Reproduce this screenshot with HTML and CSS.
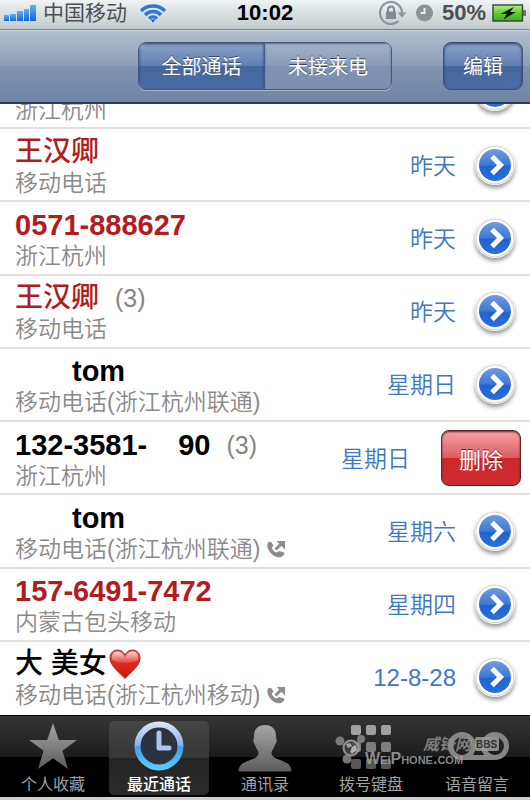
FILE: index.html
```html
<!DOCTYPE html>
<html lang="zh-CN">
  <head>
    <meta charset="UTF-8">
    <meta name="viewport" content="width=device-width, initial-scale=1">
    <title>最近通话</title>
    <link rel="stylesheet" href="styles.css">
  </head>
  <body>
    <!-- Shared icons and gradients -->
    <svg class="defs" width="0" height="0" aria-hidden="true">
      <defs>
        <linearGradient id="blueTop" x1="0" y1="0" x2="0" y2="1">
          <stop offset="0" stop-color="#6f9ce2"/>
          <stop offset="0.5" stop-color="#3f78d4"/>
          <stop offset="0.55" stop-color="#1f63cf"/>
          <stop offset="1" stop-color="#2a6fdc"/>
        </linearGradient>
        <linearGradient id="signal" x1="0" y1="0" x2="0" y2="1">
          <stop offset="0" stop-color="#5fb2f5"/>
          <stop offset="1" stop-color="#1465cf"/>
        </linearGradient>
        <linearGradient id="grey" x1="0" y1="0" x2="0" y2="1">
          <stop offset="0" stop-color="#a6a6a6"/>
          <stop offset="1" stop-color="#5c5c5c"/>
        </linearGradient>
        <linearGradient id="clockBlue" gradientUnits="userSpaceOnUse" x1="0" y1="0" x2="0" y2="50">
          <stop offset="0" stop-color="#dfe9fa"/>
          <stop offset="0.48" stop-color="#88b4ee"/>
          <stop offset="0.52" stop-color="#4a9bea"/>
          <stop offset="1" stop-color="#55d3ff"/>
        </linearGradient>
        <linearGradient id="heartRed" x1="0" y1="0" x2="0" y2="1">
          <stop offset="0" stop-color="#e8524a"/>
          <stop offset="0.5" stop-color="#e0261b"/>
          <stop offset="1" stop-color="#c01a10"/>
        </linearGradient>
        <linearGradient id="heartShine" x1="0" y1="0" x2="0" y2="1">
          <stop offset="0" stop-color="#fff" stop-opacity="0.75"/>
          <stop offset="1" stop-color="#fff" stop-opacity="0.1"/>
        </linearGradient>
        <linearGradient id="charge" x1="0" y1="0" x2="0" y2="1">
          <stop offset="0" stop-color="#b5ee8c"/>
          <stop offset="0.5" stop-color="#5fcf2c"/>
          <stop offset="1" stop-color="#3fae18"/>
        </linearGradient>
      </defs>
      <symbol id="more" viewBox="0 0 40 40">
        <circle cx="20" cy="20" r="19.5" fill="#d2d2d2"/>
        <circle cx="20" cy="20" r="18.5" fill="#fff"/>
        <circle cx="20" cy="20" r="16" fill="url(#blueTop)"/>
        <path d="M17 11.500l8.500 8.500-8.500 8.500" fill="none" stroke="#fff" stroke-width="5"/>
      </symbol>
      <symbol id="outgoing" viewBox="0 0 18 18">
        <path d="M.500 4C1 2 3 1 4.500 2.500l2 3-1.800 2.200c.8 2.300 2.600 4 4.800 4.800l2.500-1.500 5 1.500c1 1-.500 3.500-3 4.500C7 19-1 10 .500 4z" fill="#8c8c8c"/>
        <path d="M8.500 9.500l6-6" stroke="#8c8c8c" stroke-width="3"/>
        <path d="M9.500 1H18v8.500z" fill="#8c8c8c"/>
      </symbol>
    </svg>

    <div class="phone">
      <header class="status">
        <div class="carrier">
          <svg width="32" height="17" viewBox="0 0 32 17" fill="url(#signal)">
            <rect x="0" y="10" width="5" height="6"/>
            <rect x="6" y="9" width="6" height="7"/>
            <rect x="13" y="6" width="6" height="10"/>
            <rect x="20" y="4" width="5" height="12"/>
            <rect x="26" y="0" width="6" height="16"/>
          </svg>
          <span>中国移动</span>
          <svg class="wifi" width="28" height="20" viewBox="0 0 28 20" fill="none" stroke="#2f78d8" stroke-width="3.400">
            <path d="M2 8a17 17 0 0 1 24 0"/>
            <path d="M6 12a11 11 0 0 1 16 0"/>
            <path d="M10 15.500a6 6 0 0 1 8 0"/>
            <path d="M11.500 16.500h5L14 19.500z" fill="#1d53b5" stroke="none"/>
          </svg>
        </div>
        <time class="time">10:02</time>
        <div class="power">
          <svg class="lock" width="29" height="26" viewBox="0 0 29 26">
            <path d="M20.500 21A11 11 0 1 1 24 13" fill="none" stroke="#8f9496" stroke-width="2.200"/>
            <path d="M19.500 12.500h9L24 17.500z" fill="#8f9496"/>
            <rect x="8" y="11.500" width="10" height="7.500" fill="#83898c"/>
            <path d="M10 12V9.500a3 3 0 0 1 6 0V12" fill="none" stroke="#83898c" stroke-width="2"/>
          </svg>
          <svg class="alarm" width="17" height="18" viewBox="0 0 17 18">
            <circle cx="8.500" cy="9" r="8.500" fill="#8d9395"/>
            <path d="M8.500 4v5H4.500" fill="none" stroke="#e8edef" stroke-width="2"/>
          </svg>
          <span>50%</span>
          <svg width="34" height="18" viewBox="0 0 34 18">
            <rect x="31" y="6" width="3" height="6" rx="1" fill="#6b7178"/>
            <rect x="1" y="1" width="29.500" height="16" fill="url(#charge)" stroke="#3f4a3d" stroke-width="1.500"/>
            <path d="M22 3L8.500 10h6l-3 5.500L24 8h-6z" fill="#0b1a05"/>
          </svg>
        </div>
      </header>

      <nav class="navbar">
        <div class="segmented">
          <button class="seg on" type="button">全部通话</button>
          <button class="seg" type="button">未接来电</button>
        </div>
        <button class="edit" type="button">编辑</button>
      </nav>

      <main class="calls">
        <!-- Scrolled half way under the navigation bar -->
        <div class="call scrolled">
          <div class="who">
            <div class="place">浙江杭州</div>
          </div>
          <button class="more" type="button" aria-label="详情"><svg><use href="#more"/></svg></button>
        </div>

        <div class="call missed">
          <div class="who">
            <div class="name han">王汉卿</div>
            <div class="place">移动电话</div>
          </div>
          <div class="date">昨天</div>
          <button class="more" type="button" aria-label="详情"><svg><use href="#more"/></svg></button>
        </div>

        <div class="call missed">
          <div class="who">
            <div class="name">0571-888627</div>
            <div class="place">浙江杭州</div>
          </div>
          <div class="date">昨天</div>
          <button class="more" type="button" aria-label="详情"><svg><use href="#more"/></svg></button>
        </div>

        <div class="call missed">
          <div class="who">
            <div class="name han">王汉卿<span class="count">(3)</span></div>
            <div class="place">移动电话</div>
          </div>
          <div class="date">昨天</div>
          <button class="more" type="button" aria-label="详情"><svg><use href="#more"/></svg></button>
        </div>

        <div class="call">
          <div class="who">
            <div class="name indent">tom</div>
            <div class="place">移动电话(浙江杭州联通)</div>
          </div>
          <div class="date">星期日</div>
          <button class="more" type="button" aria-label="详情"><svg><use href="#more"/></svg></button>
        </div>

        <div class="call deleting">
          <div class="who">
            <div class="name">132-3581-<span class="tail">90</span><span class="count">(3)</span></div>
            <div class="place">浙江杭州</div>
          </div>
          <div class="date">星期日</div>
          <button class="delete" type="button">删除</button>
        </div>

        <div class="call">
          <div class="who">
            <div class="name indent">tom</div>
            <div class="place">移动电话(浙江杭州联通)<svg class="outgoing"><use href="#outgoing"/></svg></div>
          </div>
          <div class="date">星期六</div>
          <button class="more" type="button" aria-label="详情"><svg><use href="#more"/></svg></button>
        </div>

        <div class="call missed">
          <div class="who">
            <div class="name">157-6491-7472</div>
            <div class="place">内蒙古包头移动</div>
          </div>
          <div class="date">星期四</div>
          <button class="more" type="button" aria-label="详情"><svg><use href="#more"/></svg></button>
        </div>

        <div class="call">
          <div class="who">
            <div class="name han">大 美女<svg class="heart" viewBox="0 0 32 30">
              <path d="M16 29.500C11 24 1 17 1 9 1 4 4.500 1 8.500 1 12 1 14.500 3 16 6c1.500-3 4-5 7.500-5C27.500 1 31 4 31 9c0 8-10 15-15 20.500z" fill="url(#heartRed)" stroke="#b3231a"/>
              <path d="M3 11C2 5 5 2.500 8.500 2.500S14.500 5 16 8.500c1.500-3.500 4-6 7.500-6S30 5 29 11c-7 4-19 4-26 0z" fill="url(#heartShine)"/>
            </svg></div>
            <div class="place">移动电话(浙江杭州移动)<svg class="outgoing"><use href="#outgoing"/></svg></div>
          </div>
          <div class="date numeric">12-8-28</div>
          <button class="more" type="button" aria-label="详情"><svg><use href="#more"/></svg></button>
        </div>
      </main>

      <footer class="tabbar">
        <a class="tab" href="#favorites">
          <svg viewBox="0 0 50 50">
            <path d="M25 2l5.800 17H49L34.500 29.800 40 48 25 37.200 10 48l5.500-18.200L1 19h18.200z" fill="url(#grey)"/>
          </svg>
          <span>个人收藏</span>
        </a>
        <a class="tab on" href="#recents">
          <svg viewBox="0 0 50 50">
            <circle cx="25" cy="25" r="21.500" fill="#2c3340" stroke="url(#clockBlue)" stroke-width="6"/>
            <path d="M25 12v15h10" fill="none" stroke="#a9c6f2" stroke-width="5" stroke-linecap="round" stroke-linejoin="round"/>
          </svg>
          <span>最近通话</span>
        </a>
        <a class="tab" href="#contacts">
          <svg viewBox="0 0 50 50">
            <path d="M25 4c7 0 11 4 11 11 0 3 1 3 .500 6-.500 2-1.500 2-2 4-.500 3-3 4-3 7 0 5 7 6 12 8.500 5 2 7.500 4 8 10H-1.500c.5-6 3-8 8-10 5-2.500 12-3.500 12-8.500 0-3-2.500-4-3-7-.5-2-1.500-2-2-4-.5-3 .5-3 .5-6 0-7 4-11 11-11z" fill="url(#grey)"/>
          </svg>
          <span>通讯录</span>
        </a>
        <a class="tab" href="#keypad">
          <svg viewBox="0 0 50 50">
            <g fill="#a0a0a0">
              <rect x="5" y="4" width="10" height="10" rx="2"/>
              <rect x="20" y="4" width="10" height="10" rx="2"/>
              <rect x="35" y="4" width="10" height="10" rx="2"/>
            </g>
            <g fill="#7e7e7e">
              <rect x="5" y="21" width="10" height="10" rx="2"/>
              <rect x="20" y="21" width="10" height="10" rx="2"/>
              <rect x="35" y="21" width="10" height="10" rx="2"/>
            </g>
            <g fill="#565656">
              <rect x="5" y="38" width="10" height="10" rx="2"/>
              <rect x="20" y="38" width="10" height="10" rx="2"/>
              <rect x="35" y="38" width="10" height="10" rx="2"/>
            </g>
          </svg>
          <span>拨号键盘</span>
        </a>
        <a class="tab" href="#voicemail">
          <svg viewBox="0 0 50 50">
            <g fill="none" stroke="#858585" stroke-width="5">
              <circle cx="10" cy="25" r="11.500"/>
              <circle cx="43" cy="25" r="11.500"/>
              <path d="M10 36.500h33"/>
            </g>
          </svg>
          <span>语音留言</span>
        </a>
        <svg class="stamp" width="170" height="36" viewBox="0 0 170 36">
          <g fill="#8b8b8b">
            <circle cx="5" cy="9" r="4.500"/>
            <circle cx="26" cy="7" r="4"/>
            <circle cx="12" cy="27" r="4.500"/>
            <circle cx="16" cy="16" r="7.500" fill="#444" stroke="#a5a5a5" stroke-width="2"/>
            <path d="M11 12l4-1 2 3-4 2zM17 15l4-2 1 5-5 4-2-2z" fill="#bbb"/>
          </g>
          <text class="stamp-han" x="88" y="18">威锋网</text>
          <rect x="140" y="5" width="24" height="14" rx="2" fill="#a0a0a0"/>
          <text class="stamp-bbs" x="141" y="16">BBS</text>
          <text class="stamp-site" x="30" y="32">WeiPhone.com</text>
        </svg>
      </footer>
    </div>
  </body>
</html>
```

FILE: styles.css
```css
* {
  box-sizing: border-box;
}
body {
  margin: 0;
  background: #d0d0d0;
  font-family: "Liberation Sans", "Noto Sans CJK SC", sans-serif;
}
button {
  margin: 0;
  padding: 0;
  border: none;
  background: none;
  font-family: inherit;
  cursor: pointer;
}
svg {
  display: block;
  flex: none;
}
.defs {
  position: absolute;
}
.phone {
  display: flex;
  flex-direction: column;
  min-height: 100vh;
  padding-bottom: 3px;
}

/* Status bar */
.status {
  display: grid;
  grid-template-columns: 1fr auto 1fr;
  align-items: center;
  height: 30px;
  padding: 0 4px 3px;
  border-bottom: 1px solid #7c8287;
  background: linear-gradient(#eef4f6, #c3cacc);
  color: #4c5052;
  font-size: 21px;
  line-height: 26px;
}
.carrier, .power {
  display: flex;
  align-items: center;
}
.carrier span {
  margin-left: 7px;
}
.wifi {
  margin-left: 12px;
}
.time {
  color: #000;
  font-size: 22px;
  font-weight: bold;
}
.power {
  justify-content: flex-end;
  font-size: 22px;
  font-weight: bold;
}
.lock {
  margin-right: 9px;
}
.alarm {
  margin-right: 9px;
}
.power span {
  margin-right: 6px;
}

/* Navigation bar */
.navbar {
  display: grid;
  grid-template-columns: 1fr auto 1fr;
  align-items: center;
  height: 74px;
  padding: 0 7px 2px;
  border-top: 1px solid #c6d0dc;
  border-bottom: 2px solid #2f3b50;
  background: linear-gradient(#b3c0d0, #8a9cb7 50%, #8194b1 50%, #6d84a6);
}
.segmented {
  display: flex;
  grid-column: 2;
  overflow: hidden;
  border: 1px solid #46587a;
  border-radius: 8px;
  box-shadow: 0 1px 0 #a8b6ca;
}
.seg, .edit {
  height: 46px;
  color: #fff;
  font-size: 20px;
  text-shadow: 0 -1px 0 #3c4c68;
}
.seg {
  width: 126px;
  background: linear-gradient(#a3b2c8, #879ab8 50%, #7e93b3 50%, #7c91b2);
  box-shadow: inset 0 1px 2px #5a6c8a;
}
.seg.on, .edit {
  background: linear-gradient(#8ba3c6, #5f7fb0 50%, #45679c 50%, #4a6ca3);
  box-shadow: inset 0 1px 3px #2c436b;
}
.seg.on {
  border-right: 1px solid #3f5c8c;
}
.edit {
  justify-self: end;
  width: 80px;
  height: 48px;
  border: 1px solid #394f78;
  border-radius: 8px;
}

/* Call list */
.calls {
  display: flex;
  flex: 1;
  flex-direction: column;
  background: #fff;
}
.call {
  display: flex;
  flex: 1 0 auto;
  align-items: center;
  min-height: 73px;
  padding: 0 15px;
  border-bottom: 2px solid #e0e0e0;
}
.call:last-child {
  border-bottom-color: #fff;
}
.call.scrolled {
  flex: none;
  align-items: flex-end;
  height: 25px;
  min-height: 0;
  overflow: hidden;
}
.scrolled .place {
  padding-bottom: 3px;
}
.scrolled .more {
  margin-bottom: 16px;
}
.who {
  flex: 1;
  padding-top: 2px;
}
.name {
  display: flex;
  align-items: center;
  color: #000;
  font-size: 29px;
  font-weight: bold;
  line-height: 34px;
  white-space: pre;
}
.name.han {
  font-size: 28px;
  font-weight: 500;
}
.missed .name {
  color: #b01c20;
}
.indent {
  padding-left: 57px;
}
.tail {
  margin-left: 31px;
}
.name .count {
  margin-left: 16px;
  color: #858585;
  font-size: 25px;
  font-weight: normal;
}
.heart {
  width: 32px;
  height: 30px;
  margin-left: 2px;
}
.place {
  display: flex;
  align-items: center;
  color: #8a8a8a;
  font-size: 23px;
  font-weight: 350;
  line-height: 28px;
}
.outgoing {
  width: 18px;
  height: 18px;
  margin-left: 7px;
}
.date {
  margin-right: 19px;
  padding-top: 2px;
  color: #3f78c4;
  font-size: 23px;
  font-weight: 350;
  line-height: 28px;
}
.date.numeric {
  font-size: 24px;
}
.more svg {
  width: 40px;
  height: 40px;
  border-radius: 50%;
  box-shadow: 0 3px 4px #999;
}
.deleting {
  padding-right: 9px;
}
.deleting .date {
  margin-right: 31px;
}
.delete {
  width: 80px;
  height: 56px;
  border: 1px solid #5b2426;
  border-radius: 8px;
  background: linear-gradient(#f5a3a8, #de5b60 50%, #cc282c 50%, #cf2c30);
  box-shadow: inset 0 1px 2px #5b2426;
  color: #fff;
  font-size: 22px;
  text-shadow: 0 -1px 0 #7c1a1c;
}

/* Tab bar */
.tabbar {
  position: relative;
  display: flex;
  height: 82px;
  padding-top: 5px;
  border-top: 1px solid #000;
  background: linear-gradient(#353535, #1b1b1b 51%, #000 51%);
}
.tab {
  display: flex;
  flex: 1;
  flex-direction: column;
  align-items: center;
  height: 74px;
  margin: 0 3px;
  border-radius: 5px;
  color: #a0a0a0;
  font-size: 16px;
  line-height: 22px;
  text-decoration: none;
}
.tab svg {
  width: 50px;
  height: 50px;
  overflow: visible;
}
.tab span {
  margin-top: 3px;
}
.tab.on {
  background: linear-gradient(#454545, #363636 50%, #242424 50%, #2b2b2b);
  color: #fff;
  font-weight: 500;
}
.stamp {
  position: absolute;
  top: 16px;
  right: 25px;
  opacity: 0.85;
  pointer-events: none;
}
.stamp-han {
  fill: #8d8d8d;
  font-size: 16px;
  font-style: italic;
  font-weight: bold;
}
.stamp-bbs {
  fill: #333;
  font-size: 10px;
  font-weight: bold;
}
.stamp-site {
  fill: #a0a0a0;
  font-size: 16px;
  font-weight: bold;
  font-variant: small-caps;
}
```
